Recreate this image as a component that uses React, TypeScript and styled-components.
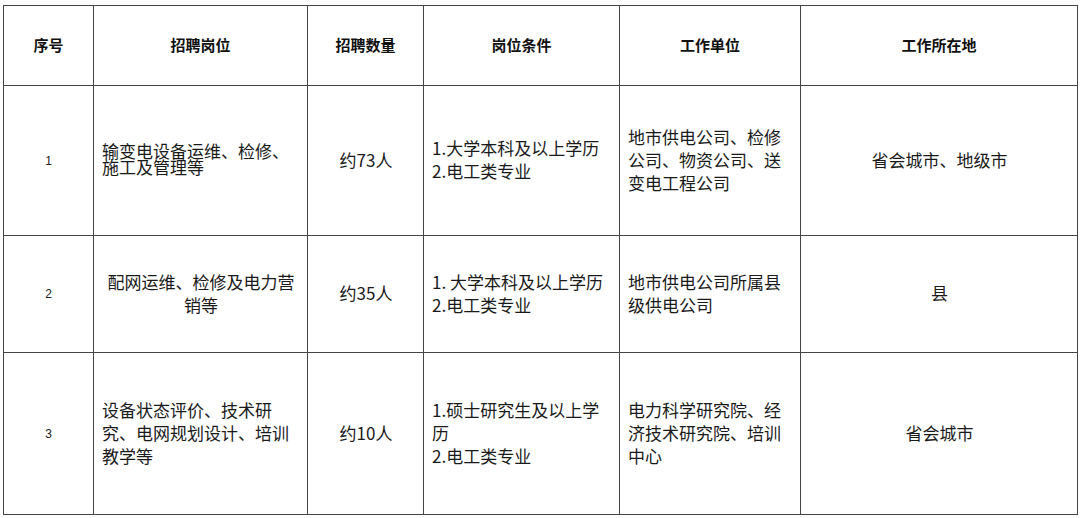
import styled, { createGlobalStyle } from "styled-components";

const GlobalStyle = createGlobalStyle`
  html, body {
    margin: 0;
    padding: 0;
    background: #ffffff;
  }
  body {
    font-family: "Noto Sans CJK SC", "Noto Sans", sans-serif;
  }
`;

const Page = styled.div`
  width: 1080px;
  height: 518px;
  padding: 5px 3px 0 3px;
  box-sizing: border-box;
  background: #ffffff;
`;

const Table = styled.table`
  width: 1074px;
  border-collapse: collapse;
  table-layout: fixed;
  border: 1px solid #8a8a8a;
`;

const HeadRow = styled.tr`
  height: 80px;
`;

const BodyRow = styled.tr<{ $h: number }>`
  height: ${(p) => p.$h}px;
`;

const HeadCell = styled.th`
  border: 1px solid #444;
  font-size: 15px;
  font-weight: 700;
  color: #111;
  text-align: center;
  vertical-align: middle;
  padding: 0 6px 2px 6px;
`;

const NumCell = styled.td`
  border: 1px solid #444;
  font-family: "Liberation Sans", "Noto Sans", sans-serif;
  font-size: 12px;
  color: #222;
  text-align: center;
  vertical-align: middle;
`;

const Cell = styled.td<{ $align?: "left" | "center"; $tight?: boolean }>`
  border: 1px solid #444;
  font-size: 17px;
  line-height: ${(p) => (p.$tight ? "16px" : "23px")};
  color: #1a1a1a;
  text-align: ${(p) => p.$align ?? "left"};
  vertical-align: middle;
  padding: 0 7px 3px 8px;
  word-break: normal;
  line-break: strict;
`;

const Line = styled.div``;

interface Job {
  no: string;
  title: string;
  titleAlign: "left" | "center";
  tight?: boolean;
  count: string;
  cond: string[];
  unit: string;
  place: string;
  height: number;
}

const jobs: Job[] = [
  {
    no: "1",
    title: "输变电设备运维、检修、施工及管理等",
    titleAlign: "left",
    tight: true,
    count: "约73人",
    cond: ["1.大学本科及以上学历", "2.电工类专业"],
    unit: "地市供电公司、检修公司、物资公司、送变电工程公司",
    place: "省会城市、地级市",
    height: 150,
  },
  {
    no: "2",
    title: "配网运维、检修及电力营销等",
    titleAlign: "center",
    count: "约35人",
    cond: ["1. 大学本科及以上学历", "2.电工类专业"],
    unit: "地市供电公司所属县级供电公司",
    place: "县",
    height: 117,
  },
  {
    no: "3",
    title: "设备状态评价、技术研究、电网规划设计、培训教学等",
    titleAlign: "left",
    count: "约10人",
    cond: ["1.硕士研究生及以上学历", "2.电工类专业"],
    unit: "电力科学研究院、经济技术研究院、培训中心",
    place: "省会城市",
    height: 162,
  },
];

export default function App() {
  return (
    <>
      <GlobalStyle />
      <Page>
        <Table>
          <colgroup>
            <col style={{ width: 90 }} />
            <col style={{ width: 214 }} />
            <col style={{ width: 116 }} />
            <col style={{ width: 196 }} />
            <col style={{ width: 181 }} />
            <col style={{ width: 277 }} />
          </colgroup>
          <thead>
            <HeadRow>
              <HeadCell>序号</HeadCell>
              <HeadCell>招聘岗位</HeadCell>
              <HeadCell>招聘数量</HeadCell>
              <HeadCell>岗位条件</HeadCell>
              <HeadCell>工作单位</HeadCell>
              <HeadCell>工作所在地</HeadCell>
            </HeadRow>
          </thead>
          <tbody>
            {jobs.map((job) => (
              <BodyRow key={job.no} $h={job.height}>
                <NumCell>{job.no}</NumCell>
                <Cell $align={job.titleAlign} $tight={job.tight}>
                  {job.title}
                </Cell>
                <Cell $align="center">{job.count}</Cell>
                <Cell>
                  {job.cond.map((c) => (
                    <Line key={c}>{c}</Line>
                  ))}
                </Cell>
                <Cell>{job.unit}</Cell>
                <Cell $align="center">{job.place}</Cell>
              </BodyRow>
            ))}
          </tbody>
        </Table>
      </Page>
    </>
  );
}
